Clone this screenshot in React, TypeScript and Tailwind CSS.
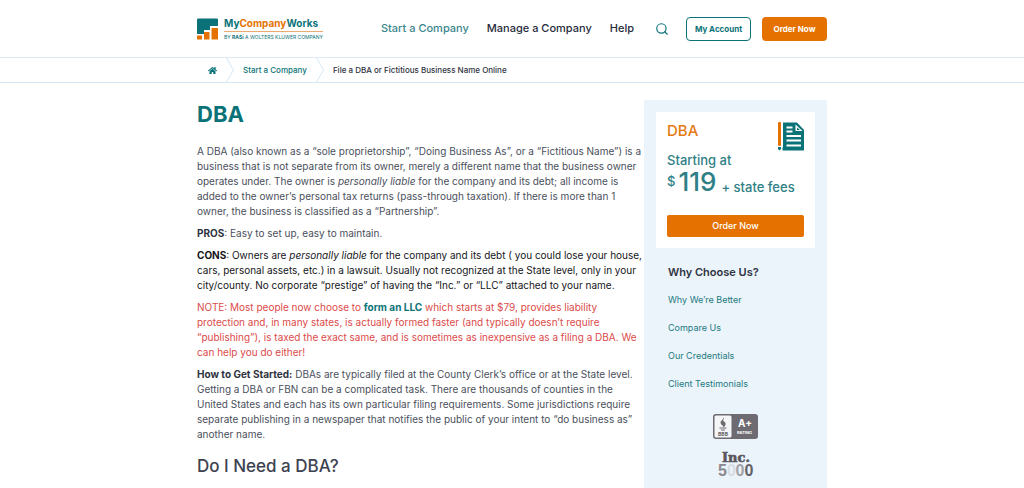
import { FiSearch } from "react-icons/fi";
import { FaHome } from "react-icons/fa";
import type { ReactNode } from "react";

function Logo() {
  return (
    <a href="#" aria-label="MyCompanyWorks home" className="flex items-center gap-[6px]">
      <svg viewBox="0 0 21 22" className="h-[22px] w-[21px]" aria-hidden="true">
        <path d="M0 1.5Q0 .5 1 .5H20Q21 .5 21 1.5V8H13V12H7V16H0Z" fill="#0b7378" />
        <rect x="0" y="17.5" width="5" height="4" rx=".5" fill="#e57200" />
        <rect x="7" y="14" width="5.500" height="7.5" rx=".5" fill="#e57200" />
        <rect x="14.5" y="10" width="6.5" height="11.5" rx=".5" fill="#e57200" />
      </svg>
      <span className="flex flex-col">
        <span className="text-[10px] leading-[12px] font-bold text-[#0b7378]">
          My<span className="text-[#e57200]">Company</span>Works
        </span>
        <span className="mt-[2px] h-px bg-[#eba973]" />
        <span className="mt-[2px] text-[5px] leading-[6px] font-normal whitespace-nowrap text-[#0b7378]">
          BY <b>RASi</b> A WOLTERS KLUWER COMPANY
        </span>
      </span>
    </a>
  );
}

function Chevron() {
  return (
    <svg viewBox="0 0 8 24" className="h-[24px] w-[8px]" fill="none" stroke="#d5e7f3" aria-hidden="true">
      <path d="M.5 0L7.5 12L.5 24" />
    </svg>
  );
}

function DocumentIcon() {
  return (
    <svg viewBox="0 0 26 29" className="h-[29px] w-[26px]" aria-hidden="true">
      <rect x="0" y="0" width="3" height="24" rx="1" fill="#e57200" />
      <path d="M0 25H3V27L1.5 28.5L0 27Z" fill="#0b7378" />
      <path d="M5 .5H19L26 8V28.5H4.5V26L5 25Z" fill="#0b7378" />
      <path d="M17.500 2.500V9H24.500Z" fill="#fff" />
      <path d="M19 5.500V8H22Z" fill="#0b7378" />
      <path d="M8.500 5.500H14.500M8.500 9.500H14.500M8.500 14H23M8.500 18.500H23M8.500 23.500H23" stroke="#fff" strokeWidth="1.800" />
    </svg>
  );
}

function BbbBadge() {
  return (
    <svg viewBox="0 0 45 25" className="h-[25px] w-[45px] font-['Inter',sans-serif]" role="img" aria-label="BBB A+ rating">
      <rect width="45" height="25" rx="3" fill="#6e6a71" />
      <rect x="1.500" y="1.500" width="17" height="22" rx="1.500" fill="#f4f5f7" />
      <path d="M10 3.500C12 5 9 6 11 7.500C13.500 9 13 11.500 10.500 13.500C11 11.500 7.500 11 7.500 8.500C7.500 6.500 10.500 6 10 3.500Z" fill="#6e6a71" />
      <path d="M6.500 14H13.500M8 16H12" stroke="#6e6a71" strokeWidth="1.200" />
      <text x="10" y="22" fontSize="5" fontWeight="800" textAnchor="middle" fill="#6e6a71">BBB</text>
      <text x="32" y="13" fontSize="10" fontWeight="700" textAnchor="middle" fill="#fff">A+</text>
      <text x="31.500" y="20" fontSize="4" fontWeight="700" textAnchor="middle" fill="#fff">RATING</text>
    </svg>
  );
}

function IncBadge() {
  return (
    <svg viewBox="0 0 36 27" className="h-[27px] w-[36px]" role="img" aria-label="Inc. 5000">
      <text x="18" y="11" fontFamily="DejaVu Serif, serif" fontSize="13" fontWeight="700" textAnchor="middle" fill="#59555c" stroke="#59555c" strokeWidth=".6">Inc.</text>
      <g fontFamily="Liberation Sans, sans-serif" fontSize="16" fontWeight="700">
        <text x="0" y="25" fill="#8b888e">5</text>
        <text x="9" y="25" fill="#d9dde2">0</text>
        <text x="17.500" y="25" fill="#a3a1a7">0</text>
        <text x="26.500" y="25" fill="#656168">0</text>
      </g>
    </svg>
  );
}

function SideLink({ children }: { children: ReactNode }) {
  return (
    <li>
      <a href="#" className="block">{children}</a>
    </li>
  );
}

export default function App() {
  return (
    <div className="min-h-screen overflow-x-hidden bg-white font-['Inter',sans-serif] text-[#4a4f5c]">
      <header className="border-b border-[#dfeaf2]">
        <div className="mx-auto flex h-[57px] max-w-[630px] items-center">
          <Logo />
          <nav className="ml-auto flex gap-[18px] text-[11px] font-medium text-[#272b3b]">
            <a href="#" className="text-[#3b868c]">Start a Company</a>
            <a href="#">Manage a Company</a>
            <a href="#">Help</a>
          </nav>
          <button type="button" aria-label="Search" className="ml-[21px] text-[#0b7378]">
            <FiSearch className="size-[14px]" />
          </button>
          <button type="button" className="ml-[17px] h-[24px] w-[65px] rounded-[4px] border border-[#0b7378] text-[8px] font-bold text-[#0b7378]">
            My Account
          </button>
          <button type="button" className="ml-[11px] h-[24px] w-[65px] rounded-[4px] bg-[#e57200] text-[8px] font-bold text-white">
            Order Now
          </button>
        </div>
      </header>

      <nav aria-label="Breadcrumb" className="border-b border-[#d5e7f3]">
        <ol className="mx-auto flex h-[24px] max-w-[630px] items-center pl-[11px] text-[8px] font-medium">
          <li className="flex items-center gap-[9px]">
            <a href="#" aria-label="Home" className="text-[#0b7378]"><FaHome className="size-[9px]" /></a>
            <Chevron />
          </li>
          <li className="flex items-center gap-[9px] pl-[9px] text-[#0b7378]">
            <a href="#">Start a Company</a>
            <Chevron />
          </li>
          <li className="pl-[9px] text-[#2f3341]">File a DBA or Fictitious Business Name Online</li>
        </ol>
      </nav>

      <div className="mx-auto flex max-w-[630px] gap-[2px] pt-[17px]">
        <main className="min-w-0 flex-1">
          <h1 className="text-[22px] leading-[28px] font-bold text-[#0b7378]">DBA</h1>
          <div className="mt-4 flex flex-col gap-[7px] text-[10px] leading-[15px]">
            <p>
              A DBA (also known as a “sole proprietorship”, “Doing Business As”, or a “Fictitious Name”) is a business that is not separate from its owner, merely a different name that the business owner operates under. The owner is <em>personally liable</em> for the company and its debt; all income is added to the owner’s personal tax returns (pass-through taxation). If there is more than 1 owner, the business is classified as a “Partnership”.
            </p>
            <p><strong className="text-[#2f3341]">PROS</strong>: Easy to set up, easy to maintain.</p>
            <p className="text-[#15161a]">
              <strong>CONS</strong>: Owners are <em>personally liable</em> for the company and its debt ( you could lose your house, cars, personal assets, etc.) in a lawsuit. Usually not recognized at the State level, only in your city/county. No corporate “prestige” of having the “Inc.” or “LLC” attached to your name.
            </p>
            <p className="text-[#dc4a4a]">
              NOTE: Most people now choose to <a href="#" className="font-bold text-[#0b7378]">form an LLC</a> which starts at $79, provides liability protection and, in many states, is actually formed faster (and typically doesn’t require “publishing”), is taxed the exact same, and is sometimes as inexpensive as a filing a DBA. We can help you do either!
            </p>
            <p>
              <strong className="text-[#2f3341]">How to Get Started:</strong> DBAs are typically filed at the County Clerk’s office or at the State level. Getting a DBA or FBN can be a complicated task. There are thousands of counties in the United States and each has its own particular filing requirements. Some jurisdictions require separate publishing in a newspaper that notifies the public of your intent to “do business as” another name.
            </p>
          </div>
          <h2 className="mt-3 text-[17px] leading-[24px] font-medium text-[#3d4250]">Do I Need a DBA?</h2>
        </main>

        <aside className="w-[183px] shrink-0 rounded-t-[2px] bg-[#ebf4fb] p-3">
          <section className="bg-white px-[11px] pt-[10px] pb-[11px] text-[#2f8086]">
            <div className="flex items-start justify-between">
              <h2 className="text-[15px] leading-[18px] font-medium text-[#e57a10]">DBA</h2>
              <DocumentIcon />
            </div>
            <p className="text-[13px] leading-[18px] font-medium">Starting at</p>
            <p className="flex items-start font-medium">
              <span className="pt-[3px] text-[13px] leading-[18px]">$</span>
              <span className="ml-[3px] text-[26px] leading-[26px]">119</span>
              <span className="ml-[5px] pt-[9px] text-[13px] leading-[18px]">+ state fees</span>
            </p>
            <button type="button" className="mt-[19px] h-[22px] w-full rounded-[2px] bg-[#e57200] text-[9px] font-medium text-white">
              Order Now
            </button>
          </section>
          <h2 className="mt-[16px] pl-3 text-[11px] leading-[16px] font-semibold text-[#2f3341]">Why Choose Us?</h2>
          <ul className="mt-[13px] flex flex-col gap-[14px] pl-3 text-[9px] leading-[14px] text-[#1d7a80]">
            <SideLink>Why We’re Better</SideLink>
            <SideLink>Compare Us</SideLink>
            <SideLink>Our Credentials</SideLink>
            <SideLink>Client Testimonials</SideLink>
          </ul>
          <div className="mt-[23px] flex flex-col items-center gap-3">
            <BbbBadge />
            <IncBadge />
          </div>
        </aside>
      </div>
    </div>
  );
}
